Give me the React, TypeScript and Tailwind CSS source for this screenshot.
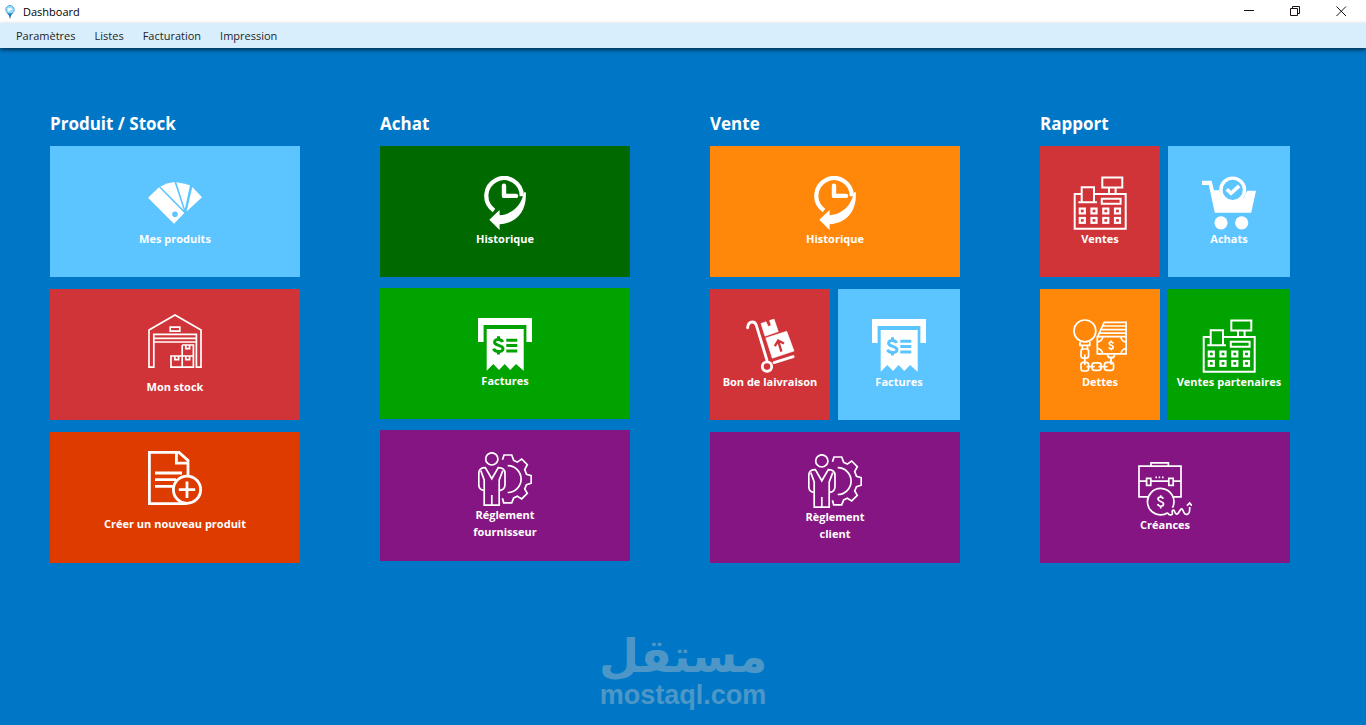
import type { ReactNode } from "react";
import clsx from "clsx";

function Glyph({ children, stroke = 1.6 }: { children: ReactNode; stroke?: number }) {
  return (
    <svg
      viewBox="0 0 54 54"
      aria-hidden="true"
      className="h-[54px] w-[54px] shrink-0"
      fill="none"
      stroke="#fff"
      strokeWidth={stroke}
    >
      {children}
    </svg>
  );
}

function SwatchIcon() {
  return (
    <Glyph>
      <g fill="#fff" stroke="none">
        <path
          fillRule="evenodd"
          d="M0 21.7 11 11.3 36.3 37 26 47.7ZM27 35.5a2.8 2.8 0 1 0 0 5.6 2.8 2.8 0 0 0 0-5.6Z"
        />
        <path d="M12.3 10.4Q19 7 26.4 6L35.8 34.3Z" />
        <path d="M28.4 6.2Q35.5 7 42 9.3L36.9 33Z" />
        <path d="M44.3 11 54 21.3 38.6 35.6Z" />
      </g>
    </Glyph>
  );
}

function WarehouseIcon() {
  return (
    <Glyph stroke={1.7}>
      <path d="M1 53.2V16L27 1 53 16V53.2H48.4V20.3H5.8V53.2Z" />
      <path d="M22.2 13.2h9.6v4h-9.6zM5.8 24.3h42.6M5.8 28h42.6" />
      <path d="M34.2 31h11.2v22.2H23V42h22.4M34.2 31v22.2" />
      <path d="M37.8 31v3.6h3.8V31M26.8 42v3.6h3.8V42M37.8 42v3.6h3.8V42" />
    </Glyph>
  );
}

function NewDocumentIcon() {
  return (
    <Glyph stroke={2.8}>
      <path d="M40 25V9.4L31 1.4H1.4v51.2H39" />
      <path d="M28.4 1v11.2H40" />
      <path d="M7 22h27M7 28.6h21M7 35.3h18" />
      <circle cx="39" cy="38.7" r="13.6" />
      <path d="M39 30.5v16.4M30.8 38.7h16.4" />
    </Glyph>
  );
}

function HistoryIcon() {
  return (
    <Glyph stroke={4.3}>
      <path d="M43.7 20.2A17.7 17.7 0 1 0 16 34.4" />
      <path d="M26 9.7v10.2h12" strokeWidth="4.4" strokeLinecap="round" strokeLinejoin="round" />
      <path
        d="M11.3 43.7 21.6 34v5.2C34 38.6 43.6 29.5 45.9 16.3H47.8C49 34.5 39 47.5 21.6 48.2V54Z"
        fill="#fff"
        stroke="none"
      />
    </Glyph>
  );
}

function ReceiptIcon() {
  return (
    <Glyph>
      <path d="M0 0h54v24h-5.6V7H5.6v17H0Z" fill="#fff" stroke="none" />
      <path
        fillRule="evenodd"
        d="M8.7 11h37v41.7L38 46l-5.8 6-5.5-6-5.7 6-5.7-6-6.6 6.7ZM28.3 20.8h11v3h-11zM28.3 26h11v3h-11zM28.3 31.4h11v3h-11z"
        fill="#fff"
        stroke="none"
      />
      <g className="stroke-(--tile)" strokeWidth="3">
        <path d="M24.6 24C23.6 20.8 16.6 20.4 16.6 24.2S25 26.9 25 30.8 16.6 34.3 15.6 30.6" />
        <path d="M20.5 18.3v3M20.5 33v3.6" />
      </g>
    </Glyph>
  );
}

function PartnerGearIcon() {
  return (
    <Glyph stroke={1.7}>
      <circle cx="13.8" cy="6.9" r="6.1" />
      <path d="M5.6 38.3C2.4 37.8.8 36 .8 32.5V21.5Q.8 15.6 7.3 15.6L13.8 26.7 20.3 15.6Q27 15.6 27 21.5v11c0 3.5-1.8 5.3-5 5.8" />
      <path d="M2.8 18.6 6.2 28v25.2h15V28l3.6-9.4M13.8 43v10" />
      <path d="M24.5 7.8 26 3h7.7l2 5.4 3.6 1.7L43.7 7l5.6 5.6-2.6 5 1.8 4.6 4.7 1.4v7.6l-4.7 1.5-1.8 4.2 2.6 4.5-5.6 5.5-4.4-2.6-3.6 1.6-2 4.9h-8l-1.3-4.6" />
      <path d="M29.7 13.7a13.4 13.4 0 0 1 0 26.8" />
    </Glyph>
  );
}

function HandTruckIcon() {
  return (
    <Glyph>
      <path d="M4.6 8.8C5 2.4 11.3 1 13.3 6.2L23.9 41" strokeWidth="2.8" strokeLinecap="round" />
      <circle cx="24" cy="47.6" r="4.7" strokeWidth="2.8" />
      <path d="M31 43.6 50.2 37.7" strokeWidth="2.8" strokeLinecap="round" />
      <g fill="#fff" stroke="#fff" strokeWidth=".6" strokeLinejoin="round">
        <path d="M18 4.5 23 2.7 25.2 7.6 28.2 6.4 26.6 1.6 31 0 35.3 12.6 22 17.2Z" />
        <path d="M22.8 19 43.7 12.3 51 32 29.3 39.2Z" />
      </g>
      <path
        d="M38.4 32.6 35.2 21.8M31.8 27.2 35.2 21.6 41 24.5"
        className="stroke-(--tile)"
        strokeWidth="2.3"
      />
    </Glyph>
  );
}

const KEY_COLUMNS = [9.3, 21, 32.8, 44.5];
const KEY_ROWS = [35, 44.4];

function RegisterIcon() {
  return (
    <Glyph stroke={2}>
      <path d="M8.7 18h-7v34.7h51V18H21" />
      <path d="M8.7 26V11.2H21V26M5.3 26.3h18.6" />
      <path d="M29.3 1.6h20v9.8h-20zM36 11.4V18M42.6 11.4V18M28.8 22.8h18.8v5H28.8z" />
      {KEY_ROWS.map((y) =>
        KEY_COLUMNS.map((x) => (
          <rect key={`${x}-${y}`} x={x - 2.5} y={y - 2.4} width="5" height="4.8" strokeWidth="2.2" />
        )),
      )}
    </Glyph>
  );
}

function CartIcon() {
  return (
    <Glyph>
      <path
        d="M0 4.8H9.6L12 14.2H17L20 22H42L45 14.7H54L49.2 36.8H12.8L6.8 9H0Z"
        fill="#fff"
        stroke="none"
      />
      <circle cx="30.7" cy="13.9" r="11.8" strokeWidth="3.4" className="fill-(--tile)" />
      <path d="M24.8 13.2 29 17.3 37.2 9.8" strokeWidth="3.6" />
      <g fill="#fff" stroke="none">
        <circle cx="19" cy="46.8" r="6.6" />
        <circle cx="39.7" cy="46.8" r="6.6" />
      </g>
    </Glyph>
  );
}

function DebtIcon() {
  return (
    <Glyph stroke={1.7}>
      <circle cx="11.9" cy="11.9" r="10.9" />
      <path d="M7 22.8v3.6h9.8v-3.6M9.3 26.4v4M14.5 26.4v4" />
      <rect x="8" y="30" width="7.6" height="9.2" rx="2.4" />
      <path d="M11.8 35.5v10.4" />
      <rect x="8" y="43.4" width="7.6" height="8.6" rx="2.4" />
      <path d="M13.5 47.6h8.2M25.5 47.6h9" />
      <rect x="19" y="43.9" width="9.2" height="7.4" rx="2.6" />
      <rect x="31.4" y="43.4" width="9.2" height="7.9" rx="2.6" />
      <path d="M24.3 17.7h28.8v17.2H24.3zM53.1 17.7V3.3H31.2l-6.4 14M30 7h23.1M28.3 10.7h24.8M26.6 14.2h26.5" />
      <path d="M29.6 17.7a5.3 5.3 0 0 1-5.3 5.2M48 17.7a5.3 5.3 0 0 0 5.1 5.2M29.6 34.9a5.3 5.3 0 0 0-5.3-5.2M48 34.9a5.3 5.3 0 0 1 5.1-5.2" />
      <path d="M40.2 24.4c-.6-1.9-4-1.9-4 0 0 2.3 4 1.5 4 3.8 0 2.1-3.6 2.1-4.2 0M38.2 21.6v1.6M38.2 29.6v1.6" />
      <path d="M34.4 36 36 38.6h4.2L41.6 36M38 38.6v7" strokeWidth="2" />
    </Glyph>
  );
}

function BriefcaseIcon() {
  return (
    <Glyph stroke={1.7}>
      <path d="M10 34.8H1V4.1h42v30.7h-7.6M13 4.1V.8h17.4v3.3" />
      <path d="M1 19.2h7.6M12.8 19.2h18M35.2 19.2H43" />
      <path d="M8.6 16.4h4.2v7H8.6zM30.8 16.4h4.4v7h-4.4z" />
      <path d="M17.4 15.4h1.6M20.6 15.4h1.6M24 15.4h1.6" />
      <path d="M34.5 45.6A13.2 13.2 0 1 0 29.8 50.8" />
      <path d="M25.3 36.8c-.8-2.5-5.3-2.3-5.3.3 0 3 5.5 1.8 5.5 5 0 2.8-4.9 2.9-5.8 0M22.7 33.2v2M22.7 44.2v2.3" />
      <path d="M29.6 50.8c1.5 3 5.4 2.5 4.7-.3-.5-2.3 1.3-3.4 2.2-1.2.9 2.4 2.4 4.2 4.2 1.2 1.6-2.8 3-5.2 4.3-2 1.2 3.2 2.4 4.6 4.7 3.6 2.4-1 2-4 2-7M49 43.7l2.7-2.6 2.3 2.6" />
    </Glyph>
  );
}

type TileProps = {
  label: string;
  icon: ReactNode;
  color: string;
  spaced?: boolean;
  raised?: boolean;
};

function Tile({ label, icon, color, spaced, raised }: TileProps) {
  return (
    <button
      type="button"
      className={clsx(
        "flex h-[131px] min-w-0 cursor-pointer flex-col items-center justify-center bg-(--tile)",
        spaced && "gap-[10px]",
        raised && "pb-3",
        color,
      )}
    >
      {icon}
      <span className="text-center text-[11px] leading-[17px] font-bold whitespace-pre text-white">
        {label}
      </span>
    </button>
  );
}

const RED = "[--tile:#d13438]";
const SKY = "[--tile:#5cc4ff]";
const VERMILION = "[--tile:#de3b00]";
const FOREST = "[--tile:#006a00]";
const GREEN = "[--tile:#00a300]";
const ORANGE = "[--tile:#ff880a]";
const PURPLE = "[--tile:#851582]";

function Section({ title, gap = "gap-3", children }: { title: string; gap?: string; children: ReactNode }) {
  return (
    <section>
      <h2 className="mb-[10px] text-[17px] leading-6 font-bold text-white">{title}</h2>
      <div className={clsx("flex flex-col", gap)}>{children}</div>
    </section>
  );
}

function Pair({ children }: { children: ReactNode }) {
  return <div className="grid grid-cols-[60fr_61fr] gap-2">{children}</div>;
}

function TitleBar() {
  return (
    <header className="flex h-[23px] items-center justify-between bg-white pr-[2px] pl-[5px]">
      <div className="flex items-center gap-2">
        <svg viewBox="0 0 10 14" aria-hidden="true" className="h-[14px] w-[10px]">
          <path d="M3.2 8 5 14 6.8 8Z" fill="#1668a8" />
          <circle cx="5" cy="4.7" r="4.2" fill="#9fdcf5" stroke="#49a9dc" />
          <path d="M2.6 3.8h3.2M3 5.6l3.8-2" stroke="#fff" strokeWidth="1.2" />
          <path d="M1.8 7.4Q5 9.6 8.2 7.4L6.6 10H3.4Z" fill="#2588cd" />
        </svg>
        <h1 className="text-[11px] leading-4 text-black">Dashboard</h1>
      </div>
      <div className="flex text-[#1a1018]">
        <button type="button" aria-label="Réduire" className="flex h-[23px] w-[46px] items-center justify-center">
          <svg viewBox="0 0 11 11" className="size-[11px]" stroke="currentColor" aria-hidden="true">
            <path d="M0 4.5h10" />
          </svg>
        </button>
        <button type="button" aria-label="Restaurer" className="flex h-[23px] w-[46px] items-center justify-center">
          <svg viewBox="0 0 11 11" className="size-[11px]" fill="none" stroke="currentColor" aria-hidden="true">
            <path d="M.5 2.5h7v7h-7zM2.5 2.5v-2h7v7h-2" />
          </svg>
        </button>
        <button type="button" aria-label="Fermer" className="flex h-[23px] w-[46px] items-center justify-center">
          <svg viewBox="0 0 11 11" className="size-[11px]" stroke="currentColor" aria-hidden="true">
            <path d="M.5 0.5 10 10M10 .5.5 10" />
          </svg>
        </button>
      </div>
    </header>
  );
}

const MENU = ["Paramètres", "Listes", "Facturation", "Impression"];

function MenuBar() {
  return (
    <nav className="flex h-[25px] items-center gap-[19px] bg-[#d8eefc] pl-4 shadow-[0_2px_4px_rgba(0,0,0,0.6)]">
      {MENU.map((item) => (
        <button key={item} type="button" className="text-[11px] leading-4 text-[#1f1f1f]">
          {item}
        </button>
      ))}
    </nav>
  );
}

export default function App() {
  return (
    <div className="flex min-h-screen flex-col bg-[#0077c6] font-['Open_Sans','Noto_Sans',sans-serif]">
      <TitleBar />
      <MenuBar />
      <main className="grid grid-cols-4 gap-x-20 pt-16 pr-[76px] pl-[50px]">
        <Section title="Produit / Stock">
          <Tile label="Mes produits" icon={<SwatchIcon />} color={SKY} />
          <Tile label="Mon stock" icon={<WarehouseIcon />} color={RED} spaced />
          <Tile label="Créer un nouveau produit" icon={<NewDocumentIcon />} color={VERMILION} spaced raised />
        </Section>
        <Section title="Achat" gap="gap-[11px]">
          <Tile label="Historique" icon={<HistoryIcon />} color={FOREST} />
          <Tile label="Factures" icon={<ReceiptIcon />} color={GREEN} />
          <Tile label={"Réglement\nfournisseur"} icon={<PartnerGearIcon />} color={PURPLE} />
        </Section>
        <Section title="Vente">
          <Tile label="Historique" icon={<HistoryIcon />} color={ORANGE} />
          <Pair>
            <Tile label="Bon de laivraison" icon={<HandTruckIcon />} color={RED} />
            <Tile label="Factures" icon={<ReceiptIcon />} color={SKY} />
          </Pair>
          <Tile label={"Règlement\nclient"} icon={<PartnerGearIcon />} color={PURPLE} />
        </Section>
        <Section title="Rapport">
          <Pair>
            <Tile label="Ventes" icon={<RegisterIcon />} color={RED} />
            <Tile label="Achats" icon={<CartIcon />} color={SKY} />
          </Pair>
          <Pair>
            <Tile label="Dettes" icon={<DebtIcon />} color={ORANGE} />
            <Tile label="Ventes partenaires" icon={<RegisterIcon />} color={GREEN} />
          </Pair>
          <Tile label="Créances" icon={<BriefcaseIcon />} color={PURPLE} />
        </Section>
      </main>
      <footer className="mt-auto flex flex-col items-center pb-4 font-bold text-[#4d97c8]">
        <p lang="ar" dir="rtl" className="font-['DejaVu_Sans',sans-serif] text-[46px] leading-[50px]">
          مستقل
        </p>
        <p className="font-['Liberation_Sans',Arial,sans-serif] text-[27px] leading-7">mostaql.com</p>
      </footer>
    </div>
  );
}
